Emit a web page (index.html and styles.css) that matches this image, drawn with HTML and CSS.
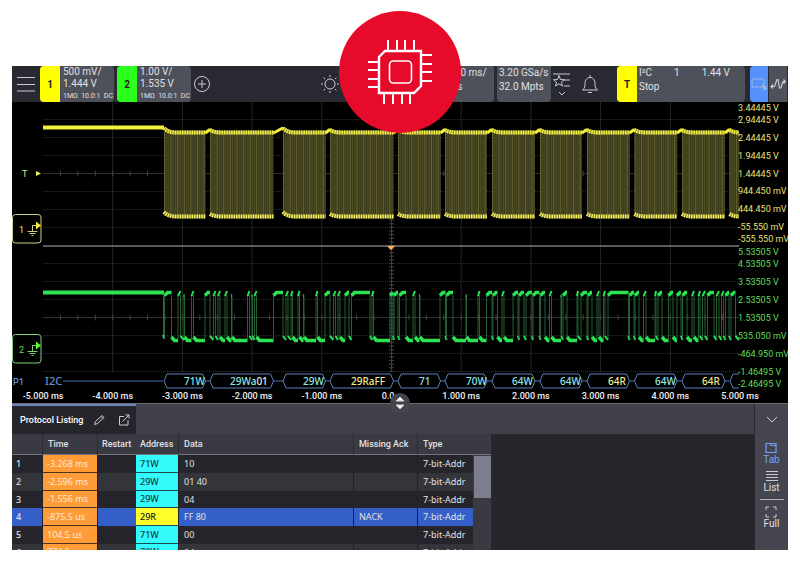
FILE: index.html
```html
<!DOCTYPE html>
<html lang="en">
<head>
    <meta charset="UTF-8">
    <meta name="viewport" content="width=device-width, initial-scale=1.0">
    <title>Oscilloscope - I2C Protocol Listing</title>
    <link rel="stylesheet" href="styles.css">
</head>
<body>
    <main class="scope">
        <div class="badge">
            <svg viewBox="0 0 66 66" fill="none" stroke="#fff" stroke-width="2">
                <path d="M18 12H54V47L47 54H12V18Z" stroke-width="2.400"/>
                <rect x="22.500" y="22" width="22" height="22" rx="4" stroke-width="1.600"/>
                <path d="M21 12V1M30 12V1M38 12V1M47 12V1M17 54V65M26 54V65M35 54V65M43 54V65"/>
                <path d="M12 23H1M12 31H1M12 40H1M12 48H1M54 16H65M54 25H65M54 33H65M54 42H65"/>
            </svg>
        </div>

        <header class="topbar">
            <button class="icon menu" aria-label="Menu">
                <svg viewBox="0 0 20 16" width="20" height="16"><path d="M1 1.500H19M1 8.500H19M1 15H19"/></svg>
            </button>
            <div class="channel">
                <button class="tag yellow">1</button>
                <div class="readout">
                    <span>500 mV/</span>
                    <span>1.444 V</span>
                    <small><i>1MΩ</i><i>10.0:1</i><i>DC</i></small>
                </div>
            </div>
            <div class="channel">
                <button class="tag green">2</button>
                <div class="readout">
                    <span>1.00 V/</span>
                    <span>1.535 V</span>
                    <small><i>1MΩ</i><i>10.0:1</i><i>DC</i></small>
                </div>
            </div>
            <button class="icon add" aria-label="Add">
                <svg viewBox="0 0 18 18" width="18" height="18"><circle cx="9" cy="9" r="7.500"/><path d="M9 5V13M5 9H13"/></svg>
            </button>

            <div class="right">
                <button class="icon sun" aria-label="Brightness">
                    <svg viewBox="0 0 20 20" width="20" height="20"><circle cx="10" cy="10" r="5"/><path d="M10 1V3M10 17V19M1 10H3M17 10H19M3.600 3.600L5 5M15 15L16.400 16.400M3.600 16.400L5 15M15 5L16.400 3.600"/></svg>
                </button>
                <div class="block horizontal"><span>1.000 ms/</span><span>0.0 s</span></div>
                <div class="block acquire"><span>3.20 GSa/s</span><span>32.0 Mpts</span></div>
                <button class="icon analyze" aria-label="Analyze">
                    <svg viewBox="0 0 20 26" width="20" height="26"><path d="M1 3H18M12 9H18M12 15H18M7 4.500L8.500 8.500L12.500 8.700L9.400 11.200L10.500 15L7 12.800L3.500 15L4.600 11.200L1.500 8.700L5.500 8.500Z"/><path d="M7 21L10 24L13 21"/></svg>
                </button>
                <button class="icon bell" aria-label="Notifications">
                    <svg viewBox="0 0 18 20" width="18" height="20"><path d="M1.500 16C4 14 4 12 4 9.500C4 6 6 3.500 9 3.500C12 3.500 14 6 14 9.500C14 12 14 14 16.500 16ZM7 18.500H11M9 1V3.500"/></svg>
                </button>
                <div class="channel trigger">
                    <button class="tag yellow">T</button>
                    <div class="readout">
                        <span class="source"><b>I²C</b><b>1</b><b>1.44 V</b></span>
                        <span>Stop</span>
                    </div>
                </div>
                <button class="tool active" aria-label="Zoom box">
                    <svg viewBox="0 0 16 12" width="16" height="12"><rect x="1" y="1" width="12" height="8" stroke-dasharray="1.500 1"/><path d="M11 7L15 11M15 8V11H12"/></svg>
                </button>
                <button class="tool" aria-label="Waveform">
                    <svg viewBox="0 0 16 12" width="16" height="12"><path d="M1 8.500H4.500L7 1.500H8L9.500 10H11L13 3.500H15.500M3 6.500L1 8.500L3 10.500M13.500 1.500L15.500 3.500L13.500 5.500" stroke-width="1.200"/></svg>
                </button>
            </div>
        </header>

        <svg class="plot" id="plot" viewBox="12 102 776 301"></svg>

        <section class="panel">
            <button class="handle" aria-label="Resize panel">
                <svg viewBox="0 0 20 20" width="20" height="20"><path d="M10 4L14 8H6ZM10 16L14 12H6Z" fill="#fff"/></svg>
            </button>
            <div class="content">
                <div class="tabs">
                    <div class="tab">
                        <span>Protocol Listing</span>
                        <button class="icon" aria-label="Edit">
                            <svg viewBox="0 0 12 12" width="12" height="12"><path d="M1.500 10.500L2.500 7.500L9 1.500L11 3.500L4.500 9.500ZM8 2.500L10 4.500"/></svg>
                        </button>
                        <button class="icon" aria-label="Open in window">
                            <svg viewBox="0 0 12 12" width="12" height="12"><path d="M6 2.500H1.500V11H10V6M7.500 1H11V4.500M11 1L4.500 7.500"/></svg>
                        </button>
                    </div>
                </div>
                <div class="listing">
                    <table>
                        <thead>
                            <tr>
                                <th class="num"></th>
                                <th class="time">Time</th>
                                <th class="restart">Restart</th>
                                <th class="addr">Address</th>
                                <th>Data</th>
                                <th class="ack">Missing Ack</th>
                                <th class="type">Type</th>
                                <th class="scroll"></th>
                            </tr>
                        </thead>
                        <tbody>
                            <tr><td class="num">1</td><td class="time">-3.268 ms</td><td></td><td class="addr">71W</td><td>10</td><td></td><td>7-bit-Addr</td><td class="scroll" rowspan="6"><div class="thumb"></div></td></tr>
                            <tr><td class="num">2</td><td class="time">-2.596 ms</td><td></td><td class="addr">29W</td><td>01 40</td><td></td><td>7-bit-Addr</td></tr>
                            <tr><td class="num">3</td><td class="time">-1.556 ms</td><td></td><td class="addr">29W</td><td>04</td><td></td><td>7-bit-Addr</td></tr>
                            <tr class="selected"><td class="num">4</td><td class="time">-875.5 us</td><td></td><td class="addr read">29R</td><td>FF 80</td><td>NACK</td><td>7-bit-Addr</td></tr>
                            <tr><td class="num">5</td><td class="time">104.5 us</td><td></td><td class="addr">71W</td><td>00</td><td></td><td>7-bit-Addr</td></tr>
                            <tr><td class="num">6</td><td class="time">774.5 us</td><td></td><td class="addr">70W</td><td>04</td><td></td><td>7-bit-Addr</td></tr>
                        </tbody>
                    </table>
                </div>
            </div>
            <nav class="side">
                <button class="collapse" aria-label="Collapse">
                    <svg viewBox="0 0 12 8" width="12" height="8"><path d="M1 1L6 6L11 1"/></svg>
                </button>
                <button class="active">
                    <svg viewBox="0 0 12 12" width="12" height="12"><path d="M1 1.500H5L6 3.500H11V10.500H1ZM5 1.500H11V3.500" stroke-width="1.200"/></svg>
                    Tab
                </button>
                <button>
                    <svg viewBox="0 0 12 12" width="12" height="12"><path d="M0 1.500H12M0 4.500H12M0 7.500H12M0 10.500H12"/></svg>
                    List
                </button>
                <hr>
                <button>
                    <svg viewBox="0 0 12 12" width="12" height="12"><path d="M1 4V1H4M8 1H11V4M11 8V11H8M4 11H1V8"/></svg>
                    Full
                </button>
            </nav>
        </section>
    </main>

    <script src="script.js"></script>
</body>
</html>
```
FILE: styles.css
```css
* {
    box-sizing: border-box;
}
body {
    margin: 0;
    background: #fff;
    font-family: Roboto, "Liberation Sans", sans-serif;
    font-size: 10px;
    color: #e0e0e4;
}
button {
    margin: 0;
    padding: 0;
    border: none;
    background: none;
    color: inherit;
    font: inherit;
    cursor: pointer;
}
.scope {
    position: relative;
    margin: 66px 12px 12px;
    background: #000;
}
.scope button svg {
    display: block;
    fill: none;
    stroke: #cbcbd1;
    stroke-width: 1;
}
.badge {
    position: absolute;
    top: -55px;
    left: 50%;
    width: 122px;
    height: 122px;
    margin-left: -61px;
    border-radius: 50%;
    background: #e60a2b;
    display: flex;
    justify-content: center;
    align-items: center;
    z-index: 2;
}
.badge svg {
    width: 66px;
    height: 66px;
}

/* top bar */
.topbar {
    display: flex;
    height: 36px;
    background: #292931;
    overflow: hidden;
}
.icon {
    display: flex;
    justify-content: center;
    align-items: center;
}
.menu {
    width: 28px;
}
.channel {
    display: flex;
    width: 74px;
    margin-right: 3px;
    border-radius: 4px;
    background: #4e515a;
    overflow: hidden;
}
.tag {
    flex: 0 0 20px;
    font-weight: bold;
    color: #222;
}
.yellow {
    background: #ffff00;
}
.green {
    background: #2bff1c;
}
.readout {
    flex: 1;
    padding-left: 3px;
    line-height: 12px;
    white-space: nowrap;
}
.readout span {
    display: block;
}
.readout small {
    display: flex;
    justify-content: space-between;
    padding-right: 1px;
    font-size: 7px;
}
.readout i {
    font-style: normal;
}
.add {
    width: 16px;
}
.add svg {
    flex: none;
}
.right {
    display: flex;
    margin-left: auto;
    padding-right: 1px;
}
.sun {
    width: 24px;
    margin-right: 94px;
}
.block {
    padding: 0 2px;
    border-radius: 0 0 4px 4px;
    background: #4e515a;
    line-height: 14px;
    white-space: nowrap;
}
.block span {
    display: block;
}
.horizontal {
    width: 58px;
    padding-left: 5px;
    margin-right: 3px;
}
.acquire {
    width: 54px;
}
.analyze {
    width: 22px;
}
.bell {
    width: 34px;
    margin-right: 10px;
}
.trigger {
    width: 128px;
    margin-right: 5px;
}
.trigger .readout {
    padding-left: 2px;
    line-height: 14px;
}
.readout .source {
    display: flex;
    justify-content: space-between;
    padding-right: 15px;
}
.source b {
    font-weight: normal;
}
.tool {
    width: 18px;
    margin-left: 1px;
    background: #4e515a;
    display: flex;
    justify-content: center;
    align-items: center;
}
.tool.active {
    border-radius: 4px 0 0 4px;
    background: #5591fb;
    margin-left: 0;
}

/* waveforms */
.plot {
    display: block;
    width: 100%;
    background: #000;
}
.plot text {
    font-size: 9px;
    font-weight: 500;
    fill: #eee;
}
.plot .volts1 {
    font-weight: 400;
    fill: #e6e27a;
}
.plot .volts2 {
    font-weight: 400;
    fill: #5fdc5a;
}
.plot .bus {
    font-family: "Noto Sans", sans-serif;
    font-size: 10px;
}
.plot .name {
    font-size: 11px;
}
.plot .line {
    fill: #5b93d6;
}
.plot .write {
    fill: #8fe6e6;
}
.plot .read {
    fill: #f2ec8c;
}

/* lower panel */
.panel {
    position: relative;
    display: flex;
    height: 147px;
    border-top: 1px solid #6c6c74;
    background: #26262c;
}
.handle {
    position: absolute;
    top: -11px;
    left: 50%;
    width: 20px;
    height: 20px;
    margin-left: -10px;
    border-radius: 50%;
    background: #44444c;
}
.content {
    flex: 1;
    display: grid;
    grid-template-columns: 479fr 263fr;
    grid-template-rows: 30px 1fr;
    margin-right: 1px;
    overflow: hidden;
}
.tabs {
    grid-column: span 2;
    background: #40404a;
}
.tab {
    display: flex;
    align-items: center;
    width: 124px;
    height: 30px;
    padding-left: 8px;
    border-top: 2px solid #6a83bd;
    background: #25252c;
    color: #fff;
    font-size: 9px;
    font-weight: 500;
    white-space: nowrap;
}
.tab .icon {
    margin-left: 10px;
}
.tab .icon + .icon {
    margin-left: 13px;
}
.listing {
    background: #3a3a42;
    overflow: hidden;
}
table {
    width: 100%;
    table-layout: fixed;
    border-collapse: separate;
    border-spacing: 0;
}
th {
    height: 21px;
    padding: 0 0 0 5px;
    border-left: 1px solid #2c2c33;
    border-bottom: 1px solid #75757d;
    background: #3a3a42;
    font-size: 9px;
    font-weight: 500;
    text-align: left;
    white-space: nowrap;
}
td {
    height: 18px;
    padding: 0 0 0 5px;
    border-left: 1px solid #212127;
    font-family: "Noto Sans", sans-serif;
    font-size: 9px;
    line-height: 12px;
    white-space: nowrap;
}
tr:nth-child(3n) td {
    height: 17px;
}
tbody tr {
    background: #25252b;
}
tbody tr:nth-child(even) {
    background: #34343b;
}
tbody tr.selected {
    background: #345fc9;
}
.num {
    width: 30px;
    padding-left: 4px;
    border-left: none;
    font-weight: 500;
}
.time {
    width: 55px;
}
.restart {
    width: 39px;
    padding-left: 4px;
}
.addr {
    width: 42px;
    padding-left: 4px;
    border-left: none;
}
.ack {
    width: 64px;
}
.type {
    width: 56px;
}
.scroll {
    width: 18px;
    border-left: none;
}
td.time {
    padding-left: 4px;
    border-bottom: 1px solid #4a3420;
    background: #ff9c38;
    color: #ffe9cf;
}
td.addr {
    border-bottom: 1px solid #1c4a50;
    background: #33fbfb;
    color: #123a3e;
    font-weight: 500;
}
td.read {
    background: #ffff2a;
    color: #222;
}
td.scroll {
    padding: 1px 0 0 1px;
    background: #3a3a42;
    vertical-align: top;
}
.thumb {
    height: 42px;
    background: #7d7e8c;
}
.side {
    flex: 0 0 33px;
    display: flex;
    flex-direction: column;
    align-items: center;
    background: #45454f;
}
.side button {
    display: flex;
    flex-direction: column;
    align-items: center;
    margin-bottom: 4px;
    line-height: 12px;
}
.side .collapse {
    margin: 12px 0 18px;
}
.side .active {
    color: #76a2f8;
}
.side .active svg {
    stroke: #76a2f8;
}
.side hr {
    width: 24px;
    height: 1px;
    margin: 1px 0 6px;
    border: none;
    background: #b4b4bc;
}
```
FILE: script.js
```js
const plot = document.getElementById("plot");
let out = "";

function line(x1, y1, x2, y2, color, extra = "") {
    out += `<line x1="${x1}" y1="${y1}" x2="${x2}" y2="${y2}" stroke="${color}" ${extra}/>`;
}

function path(d, color, width, extra = "") {
    out += `<path d="${d}" fill="none" stroke="${color}" stroke-width="${width}" ${extra}/>`;
}

function label(x, y, value, cls = "", anchor = "start") {
    out += `<text x="${x}" y="${y}" class="${cls}" text-anchor="${anchor}">${value}</text>`;
}

const LEFT = 43;
const RIGHT = 739;
const DIV = 69.7;

// graticule
for (let i = 1; i < 10; i++) {
    const x = LEFT + i * DIV;
    line(x, 102, x, 372, i === 5 ? "#3c3c3c" : "#262626");
}
[119.5, 137.5, 155.5, 191.5, 209.5, 227.5, 263.5, 281.5, 299.5, 335.5, 353.5, 371.5].forEach(y => {
    line(LEFT, y, RIGHT, y, "#2c2c2c", 'stroke-dasharray="1 1"');
});
[173.5, 317.5].forEach(y => {
    line(LEFT, y, RIGHT, y, "#303030");
    for (let x = LEFT + DIV / 4; x < RIGHT; x += DIV / 4) {
        line(x, y - 3, x, y + 3, "#404040");
    }
});
for (let y = 105; y < 372; y += 3.6) {
    line(389, y, 394, y, "#444");
}

// channel 1: clock bursts
const bursts = [
    [164, 205.5], [210, 273.5], [283, 325.5], [330, 393.5], [398, 440.5], [445, 487],
    [492, 535], [540, 582], [587, 629.5], [634.5, 677], [682, 725], [729.5, 739]
];
line(LEFT, 127.5, 164, 127.5, "#f4f03a", 'stroke-width="4"');
bursts.forEach(([a, b], i) => {
    out += `<rect x="${a}" y="132" width="${b - a}" height="84" fill="#3b3a1b"/>`;
    for (let x = a + 0.5, n = 0; x < b; x += 2.2, n++) {
        line(x, 132, x, 215, n % 3 ? "#57562a" : "#77763c", 'stroke-width="0.7"');
    }
    const mid = Math.min(a + 12, b);
    const high = i === 0 || i === 2 ? 128 : 130;
    const low = i === 0 || i === 2 ? 212 : 214;
    path(`M${a} ${high}Q${a + 4} 132.500 ${mid} 132.500H${b}`, "#8e8b2c", 4);
    path(`M${a} ${high}Q${a + 4} 132.500 ${mid} 132.500H${b}`, "#f6f24a", 4, 'stroke-dasharray="1.4 1"');
    path(`M${a} ${low}Q${a + 4} 216.500 ${mid} 216.500H${b}`, "#77752c", 4);
    path(`M${a} ${low}Q${a + 4} 216.500 ${mid} 216.500H${b}`, "#f4f060", 4, 'stroke-dasharray="1.4 1"');
    if (bursts[i + 1]) {
        const next = bursts[i + 1][0];
        path(`M${b} 133L${next - 1} ${i === 1 ? 128.5 : 130}H${next + 1}`, "#f4f03a", 3);
    }
});
line(LEFT, 246, RIGHT, 246, "#77777a", 'stroke-width="1.5"');

// channel 2: intervals where the data line is high
const highs = [
    [164.5, 171.5], [178, 180.5], [184, 184.5], [191.5, 193.5], [205, 210], [213.5, 215.5], [218, 220],
    [225, 227], [231.5, 232], [247.5, 249.5], [252, 252.5], [254.5, 256.5], [273.5, 283], [286, 288],
    [291, 292.5], [298, 299.5], [303.5, 304], [316, 317.5], [325, 330], [333.5, 335.5], [338, 340],
    [345, 349], [351.5, 370], [372, 373.5], [390, 393], [394, 398], [399.5, 406], [413, 415],
    [419.5, 420], [440, 445.5], [446.5, 453], [466, 466.5], [478, 479.5], [486.5, 492], [493, 497.5],
    [502, 504], [513, 518], [519, 524], [526, 532], [533, 539.5], [540.5, 545], [549.5, 551.5],
    [561, 561.5], [563, 567], [577, 578], [581, 587], [588, 592], [597, 599], [603.5, 605],
    [608, 628.5], [629.5, 634], [635, 639], [643.5, 646], [655, 656], [658, 662], [668.5, 673],
    [677, 681], [682.5, 687], [692, 694], [698.5, 700], [702.5, 705], [707.5, 714], [716.5, 719],
    [721.5, 723.5], [725.5, 729], [731, 735.5]
];
line(LEFT, 292.5, 164, 292.5, "#2be352", 'stroke-width="4"');
line(163.5, 293, 163.5, 338, "#1c7a34");
path("M163 335L164.500 339", "#2be352", 2);
highs.forEach(([a, b], i) => {
    const next = highs[i + 1] ? highs[i + 1][0] : RIGHT;
    line(a, 295, a, 339, "#28693a", 'stroke-width="0.9"');
    line(b, 295, b, 337, "#28693a", 'stroke-width="0.9"');
    if (b - a < 1) {
        line(a, 294, a, 298, "#2a9c46");
    } else if (b - a < 3) {
        path(`M${a} 296L${b} 291`, "#2be352", 2);
    } else {
        path(`M${a} 295.500L${a + 3} 292.500H${b}`, "#2be352", 3.5);
    }
    if (next - b < 4) {
        path(`M${b} 336L${next} 340`, "#2be352", 2);
    } else {
        path(`M${b} 337L${b + 3} 340.500H${next}`, "#2be352", 3.5);
    }
});

// vertical scales
const volts1 = ["3.44445 V", "2.94445 V", "2.44445 V", "1.94445 V", "1.44445 V", "944.450 mV", "444.450 mV", "-55.550 mV", "-555.550 mV"];
const volts2 = ["5.53505 V", "4.53505 V", "3.53505 V", "2.53505 V", "1.53505 V", "535.050 mV", "-464.950 mV", "-1.46495 V", "-2.46495 V"];
const y1 = [111, 123, 141, 159, 177, 194, 212, 230, 242];
const y2 = [255, 267, 285, 303, 321, 339, 357, 375, 387];
volts1.forEach((v, i) => label(738, y1[i], v, "volts1"));
volts2.forEach((v, i) => label(738, y2[i], v, "volts2"));

// trigger level and ground markers
label(22, 177, "T", "volts1");
out += '<path d="M36 171L41 173.500L36 176Z" fill="#f4f05a"/>';
out += '<path d="M387 246H395L391 250Z" fill="#ffb45a"/>';
[[214.5, "1", "#d2cf86", "volts1", "#f4f03a"], [334.5, "2", "#7fcf7a", "volts2", "#5aff2a"]].forEach(([y, n, color, cls, arrow]) => {
    out += `<rect x="12.500" y="${y}" width="28.500" height="28.500" rx="3" fill="#000" stroke="${color}"/>`;
    label(19, y + 18, n, cls);
    path(`M36 ${y + 11}H32.500V${y + 17}M27.500 ${y + 17}H37.500M29.500 ${y + 19}H35.500M31.500 ${y + 21}H33.500`, color, 1);
    out += `<path d="M36 ${y + 7}L41 ${y + 11}L36 ${y + 15}Z" fill="${arrow}"/>`;
});

// decoded bus
const packets = ["71W", "29Wa<tspan fill='#eee'>01</tspan>", "29W", "29RaFF", "71", "70W", "64W", "64W", "64R", "64W", "64R"];
const textX = [184, 230, 303, 351, 419, 466, 512, 560, 608, 655, 702];
label(13, 385, "P1", "line");
label(45, 385, "I2C", "bus name line");
line(63, 381, 163, 381, "#3c6aa8");
bursts.forEach(([a, b], i) => {
    if (i === bursts.length - 1) {
        path(`M739 374H733L730 381L733 388H739`, "#5a80b8", 1);
        return;
    }
    path(`M${a} 381L${a + 3} 374H${b - 3}L${b} 381L${b - 3} 388H${a + 3}Z`, "#5a80b8", 1);
    line(b, 381, bursts[i + 1][0], 381, "#4a7ab8");
    label(textX[i], 385, packets[i], "bus " + (packets[i].includes("R") ? "read" : "write"));
});

// time scale
for (let i = 0; i <= 10; i++) {
    const t = i - 5;
    label(LEFT + i * DIV, 399, t === 0 ? "0.0 s" : t.toFixed(3) + " ms", "", "middle");
}

plot.innerHTML = out;
```
